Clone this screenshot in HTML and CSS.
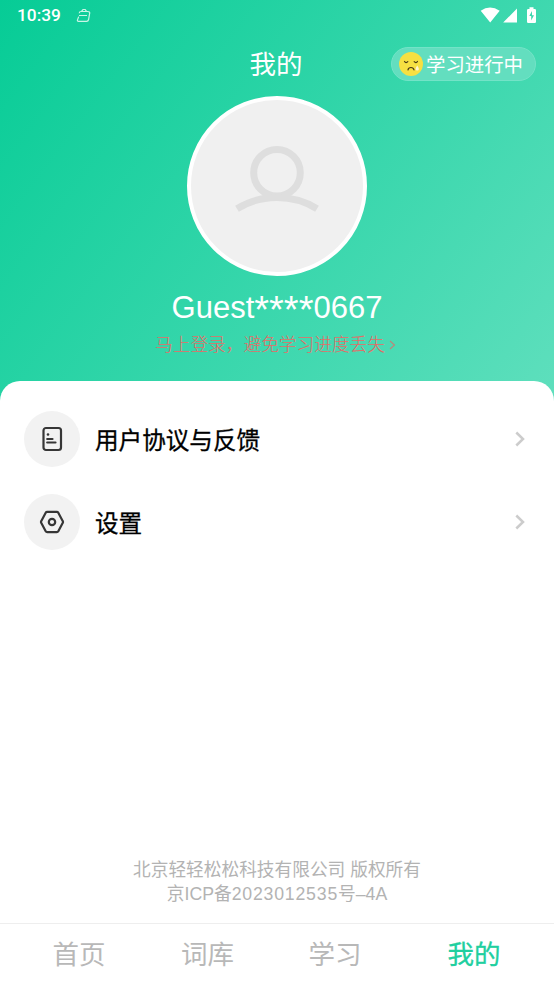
FILE: index.html
```html
<!DOCTYPE html>
<html lang="zh-CN">
<head>
<meta charset="utf-8">
<title>我的</title>
<link rel="stylesheet" href="styles.css">
</head>
<body>
<div class="app">
  <header class="hero">
    <div class="status">
      <span class="clock">10:39</span>
      <svg class="bag" width="16" height="16" viewBox="0 0 16 16"><path d="M3.2 5.2Q3.4 3.500 5 3.500H11.700Q14 3.500 13.700 5.200L12.600 11.500Q12.200 13.300 10.600 13.300H2.500Q1 13.300 1.500 11.900L2.700 8.600M5.500 3.300L7 1.500H9.200L10.500 3.300M3 7.500H11"/></svg>
      <svg class="system" width="60" height="24" viewBox="0 0 60 24"><path d="M.7 9.800Q10 3.200 19.700 9.800L10.200 21.500ZM37 7.500V21.500H23.200ZM47 9.200Q47 8 48.200 8H49.500V6.200H53.500V8H54.800Q56 8 56 9.200V20.800Q56 22 54.800 22H48.200Q47 22 47 20.800Z"/><path class="bolt" d="M52 10L49.300 15H51.200V19.500L54 14.200H52Z"/></svg>
    </div>
    <div class="titlebar">
      <h1>我的</h1>
      <div class="pill">
        <svg width="26" height="26" viewBox="0 0 26 26"><circle cx="13" cy="13" r="12" fill="#f6e042"/><path d="M6.500 10.500Q8 12.600 9.800 10.700M16.200 10.700Q18 12.600 19.500 10.500M10 18.800Q10.400 16.500 13 16.500Q15.400 16.500 16 18.800" fill="none" stroke="#493b16" stroke-width="1.200" stroke-linecap="round"/><path d="M19.200 14.500Q22.500 19.500 19.200 19.500Q16 19.500 19.200 14.500Z" fill="#fff5d4"/></svg>
        <span>学习进行中</span>
      </div>
    </div>
    <div class="avatar">
      <svg width="180" height="180" viewBox="0 0 180 180"><circle cx="90" cy="90" r="88" fill="#f0f0f0" stroke="#fff" stroke-width="4"/><g fill="none" stroke="#dedede" stroke-width="7"><circle cx="90" cy="76.800" r="23.300"/><path d="M50 112.700Q68 101.500 90 101.500T130 112.700"/></g></svg>
    </div>
    <div class="name">Guest<span class="mask">****</span>0667</div>
    <div class="login"><span>马上登录，避免学习进度丢失</span><svg width="7" height="10" viewBox="0 0 7 10"><path d="M1 1L5.500 5L1 9"/></svg></div>
  </header>
  <main class="sheet">
    <div class="row">
      <div class="disc"><svg width="28" height="28" viewBox="0 0 28 28"><rect x="5.500" y="3" width="17.500" height="22" rx="2.500"/><path d="M9.200 14H14.500M9.200 17.500H17.500" stroke-linecap="round"/><circle class="dot" cx="10" cy="9.500" r="1.300"/></svg></div>
      <span class="label">用户协议与反馈</span>
      <svg class="chevron" width="10" height="16" viewBox="0 0 10 16"><path d="M1.300 1.500L8 8L1.300 14.500"/></svg>
    </div>
    <div class="row">
      <div class="disc"><svg width="28" height="28" viewBox="0 0 28 28"><path d="M9.200 3.800H18.800Q19.800 3.800 20.300 4.700L24.800 13.200Q25.300 14 24.800 14.800L20.300 23.300Q19.800 24.200 18.800 24.200H9.200Q8.200 24.200 7.700 23.300L3.200 14.800Q2.700 14 3.200 13.200L7.700 4.700Q8.200 3.800 9.200 3.800Z"/><circle cx="14" cy="14" r="3.200"/></svg></div>
      <span class="label">设置</span>
      <svg class="chevron" width="10" height="16" viewBox="0 0 10 16"><path d="M1.300 1.500L8 8L1.300 14.500"/></svg>
    </div>
    <footer class="legal">
      <div>北京轻轻松松科技有限公司 版权所有</div>
      <div>京ICP备<span class="number">2023012535</span>号–4A</div>
    </footer>
  </main>
  <nav class="tabs"><span>首页</span><span>词库</span><span>学习</span><span class="active">我的</span></nav>
</div>
</body>
</html>
```
FILE: styles.css
```css
* { box-sizing: border-box; }
body { margin: 0; font-family: "Liberation Sans", "Noto Sans CJK SC", sans-serif; }
svg { display: block; flex: none; }
.app { width: 554px; height: 984px; display: flex; flex-direction: column; overflow: hidden; background: #fff; }
.hero { height: 406px; flex: none; color: #fff; background: linear-gradient(127deg, #06cc96 0%, #5fdfbd 100%); }
.status { height: 32px; display: flex; align-items: center; padding: 0 14px 0 17px; }
.clock { font: 500 17.300px/31px Roboto, sans-serif; width: 59px; margin-top: -1px; }
.bag { fill: none; stroke: #c9f5e7; stroke-width: 1.200; margin-top: -1px; }
.system { margin: -5px 0 1px auto; fill: #fff; }
.system .bolt { fill: #3dd7ae; }
.titlebar { height: 64px; display: grid; grid-template-columns: 1fr auto 1fr; align-items: center; padding: 0 19px 0 17px; }
h1 { grid-column: 2; margin: 2px 0 0; font-size: 26.500px; font-weight: 400; line-height: 40px; }
.pill { justify-self: end; width: 145px; height: 34px; margin-right: -1px; display: flex; align-items: center; gap: 2px; padding-left: 6px; border: 1px solid #73e3c7; border-radius: 17px; background: #63debf; font-size: 19.400px; line-height: 30px; white-space: nowrap; }
.pill span { margin-top: 1px; }
.avatar { width: 180px; margin: 0 auto; }
.name { height: 50px; margin-top: 7px; text-align: center; font-size: 31px; line-height: 50px; }
.mask { font-size: 38px; line-height: 0; vertical-align: -5px; }
.login { height: 24px; display: flex; align-items: center; justify-content: center; gap: 4px; padding-right: 3px; color: #e36c67; font-size: 17.700px; font-weight: 300; line-height: 24px; }
.login svg { fill: none; stroke: #b9897b; stroke-width: 1.200; }
.sheet { flex: 1; margin-top: -25.500px; padding: 16.500px 24px 0; border-radius: 20px 20px 0 0; background: #fff; display: flex; flex-direction: column; }
.row { height: 83.500px; flex: none; display: flex; align-items: center; }
.disc { width: 56px; height: 56px; border-radius: 50%; background: #f2f2f2; display: grid; place-items: center; margin-right: 15px; }
.disc svg { fill: none; stroke: #363636; stroke-width: 2.200; }
.disc .dot { fill: #363636; stroke: none; }
.label { font-size: 23.600px; font-weight: 400; color: #000; -webkit-text-stroke: .3px #000; }
.chevron { margin: 0 5px 0 auto; fill: none; stroke: #ccc; stroke-width: 2.500; }
.legal { margin-top: auto; padding-bottom: 17px; text-align: center; color: #b3b3b3; font-size: 17.700px; line-height: 24px; }
.number { letter-spacing: .8px; }
.tabs { height: 61px; flex: none; display: grid; grid-template-columns: 158px 99px 156px 141px; border-top: 1px solid #eee; text-align: center; font-size: 26.500px; line-height: 62px; color: #b8b8b8; }
.tabs .active { color: #20cf9f; -webkit-text-stroke: .3px #20cf9f; padding-right: 19px; }
```
